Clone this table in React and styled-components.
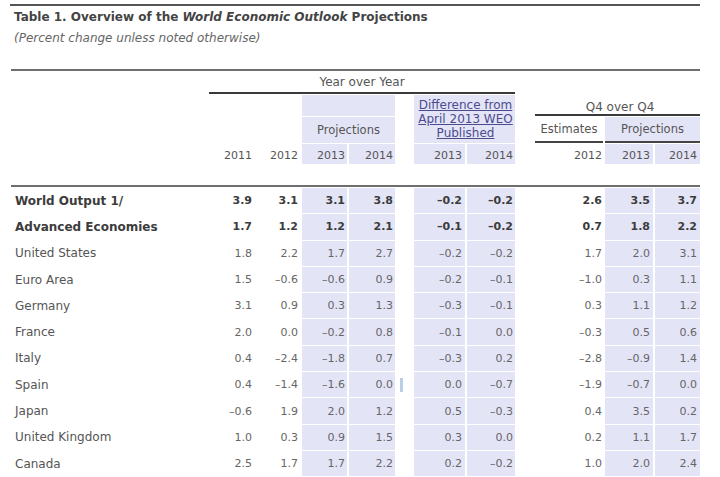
import React from "react";
import styled, { createGlobalStyle, css } from "styled-components";

const GlobalStyle = createGlobalStyle`
  html, body { margin: 0; padding: 0; background: #ffffff; }
  body { font-family: "DejaVu Sans", Verdana, sans-serif; color: #555; }
`;

const SHADE = "#e4e4f7";

const columns = css`
  display: grid;
  grid-template-columns: 192px 49px 44px 45px 46px 15px 51px 48px 16px 68px 48px 45px;
  column-gap: 2px;
`;

const Page = styled.div`
  width: 720px;
  padding: 4px 0 0 10px;
  box-sizing: border-box;
`;

const Rule = styled.div`
  height: 2px;
  width: ${(p) => p.$w || 690}px;
  margin-left: ${(p) => p.$ml || 0}px;
  margin-top: ${(p) => p.$mt || 0}px;
  background: ${(p) => p.$color || "#6e6e6e"};
`;

const Title = styled.div`
  margin: 3.5px 0 0 4px;
  font-size: 12px;
  line-height: 15px;
  font-weight: bold;
  color: #444;
  white-space: nowrap;
  em { font-style: italic; }
`;

const Subtitle = styled.div`
  margin: 6px 0 0 4px;
  font-size: 12px;
  line-height: 15px;
  font-style: italic;
  color: #666;
`;

const Header = styled.div`
  ${columns};
  margin-left: 1px;
  grid-template-rows: 22px 21px 26px 20px;
  row-gap: 1px;
  padding: 1px 0 21px;
  font-size: 11.5px;
  color: #555;
`;

const Cell = styled.div`
  display: flex;
  align-items: center;
  justify-content: ${(p) => p.$justify || "flex-end"};
  padding-right: ${(p) => (p.$pr ?? 2)}px;
  background: ${(p) => (p.$shaded ? SHADE : "transparent")};
  white-space: nowrap;
  min-width: 0;
`;

const GroupTitle = styled(Cell)`
  grid-column: ${(p) => p.$cols};
  grid-row: ${(p) => p.$rows};
  justify-content: center;
  align-items: ${(p) => p.$align || "center"};
  padding: 0 0 ${(p) => p.$pb || 0}px ${(p) => p.$pl || 0}px;
  margin-left: ${(p) => p.$ml || 0}px;
  border-bottom: 2px solid #3a3a3a;
  font-size: 12px;
`;

const SpanCell = styled(Cell)`
  grid-column: ${(p) => p.$cols};
  grid-row: ${(p) => p.$rows};
  justify-content: center;
  padding-right: 0;
  border-bottom: ${(p) => (p.$rule ? "2px solid #444" : "none")};
`;

const DiffHead = styled(SpanCell)`
  flex-direction: column;
  font-size: 12px;
  line-height: 14px;
  color: #4b4b8e;
  text-decoration: underline;
  text-align: center;
  padding-left: 2px;
`;

const YearCell = styled(Cell)`
  grid-row: 4;
  font-size: 11px;
  padding-top: 3px;
`;

const Body = styled.div`
  ${columns};
  margin-left: 1px;
  padding-top: 1px;
  grid-auto-rows: 25.3px;
  row-gap: 1px;
`;

const Label = styled(Cell)`
  justify-content: flex-start;
  padding-left: 4px;
  font-size: 12px;
  font-weight: ${(p) => (p.$bold ? "bold" : "normal")};
  color: ${(p) => (p.$bold ? "#3c3c3c" : "#555")};
`;

const Num = styled(Cell)`
  font-size: 11px;
  font-weight: ${(p) => (p.$bold ? "bold" : "normal")};
  color: ${(p) => (p.$bold ? "#3c3c3c" : "#666")};
`;

const Mark = styled.span`
  display: block;
  width: 3px;
  height: 14px;
  margin-left: 3px;
  background: #b9d0e4;
`;

const shadedCols = [3, 4, 6, 7, 10, 11];
const padRight = [0, 2, 2, 2, 2, 0, 3, 2, 0, 1, 3, 3];

const rows = [
  ["World Output 1/", true, ["3.9", "3.1", "3.1", "3.8"], ["–0.2", "–0.2"], ["2.6", "3.5", "3.7"]],
  ["Advanced Economies", true, ["1.7", "1.2", "1.2", "2.1"], ["–0.1", "–0.2"], ["0.7", "1.8", "2.2"]],
  ["United States", false, ["1.8", "2.2", "1.7", "2.7"], ["–0.2", "–0.2"], ["1.7", "2.0", "3.1"]],
  ["Euro Area", false, ["1.5", "–0.6", "–0.6", "0.9"], ["–0.2", "–0.1"], ["–1.0", "0.3", "1.1"]],
  ["Germany", false, ["3.1", "0.9", "0.3", "1.3"], ["–0.3", "–0.1"], ["0.3", "1.1", "1.2"]],
  ["France", false, ["2.0", "0.0", "–0.2", "0.8"], ["–0.1", "0.0"], ["–0.3", "0.5", "0.6"]],
  ["Italy", false, ["0.4", "–2.4", "–1.8", "0.7"], ["–0.3", "0.2"], ["–2.8", "–0.9", "1.4"]],
  ["Spain", false, ["0.4", "–1.4", "–1.6", "0.0"], ["0.0", "–0.7"], ["–1.9", "–0.7", "0.0"], true],
  ["Japan", false, ["–0.6", "1.9", "2.0", "1.2"], ["0.5", "–0.3"], ["0.4", "3.5", "0.2"]],
  ["United Kingdom", false, ["1.0", "0.3", "0.9", "1.5"], ["0.3", "0.0"], ["0.2", "1.1", "1.7"]],
  ["Canada", false, ["2.5", "1.7", "1.7", "2.2"], ["0.2", "–0.2"], ["1.0", "2.0", "2.4"]],
];

const years = ["2011", "2012", "2013", "2014", null, "2013", "2014", null, "2012", "2013", "2014"];

function DataRow({ row }) {
  const [label, bold, yoy, diff, q4, mark] = row;
  const values = [...yoy, null, ...diff, null, ...q4];
  return (
    <>
      <Label $bold={bold}>{label}</Label>
      {values.map((v, i) => {
        const col = i + 1;
        if (v === null) {
          return (
            <Cell key={i} $justify="flex-start" $pr={0}>
              {mark && col === 5 ? <Mark /> : null}
            </Cell>
          );
        }
        return (
          <Num key={i} $bold={bold} $shaded={shadedCols.includes(col)} $pr={padRight[col]}>
            {v}
          </Num>
        );
      })}
    </>
  );
}

export default function App() {
  return (
    <Page>
      <GlobalStyle />
      <Rule $color="#555" />
      <Title>
        Table 1. Overview of the <em>World Economic Outlook</em> Projections
      </Title>
      <Subtitle>(Percent change unless noted otherwise)</Subtitle>
      <Rule $mt={23.5} $ml={1} $w={689} />
      <Header>
        <GroupTitle $cols="2 / 9" $rows="1" $ml={4}>Year over Year</GroupTitle>
        <GroupTitle $cols="10 / 13" $rows="1 / 3" $align="flex-end" $pb={0} $pl={5}>
          Q4 over Q4
        </GroupTitle>
        <SpanCell $cols="4 / 6" $rows="2" $shaded />
        <SpanCell $cols="4 / 6" $rows="3" $shaded>Projections</SpanCell>
        <DiffHead $cols="7 / 9" $rows="2 / 4" $shaded>
          <span>Difference from</span>
          <span>April 2013 WEO</span>
          <span>Published</span>
        </DiffHead>
        <SpanCell $cols="10" $rows="3" $rule>Estimates</SpanCell>
        <SpanCell $cols="11 / 13" $rows="3" $shaded $rule>Projections</SpanCell>
        {years.map((y, i) => {
          const col = i + 1;
          return (
            <YearCell
              key={i}
              style={{ gridColumn: col + 1 }}
              $shaded={y !== null && shadedCols.includes(col)}
              $pr={padRight[col]}
            >
              {y}
            </YearCell>
          );
        })}
      </Header>
      <Rule $ml={1} $w={689} />
      <Body>
        {rows.map((r) => (
          <DataRow key={r[0]} row={r} />
        ))}
      </Body>
    </Page>
  );
}
